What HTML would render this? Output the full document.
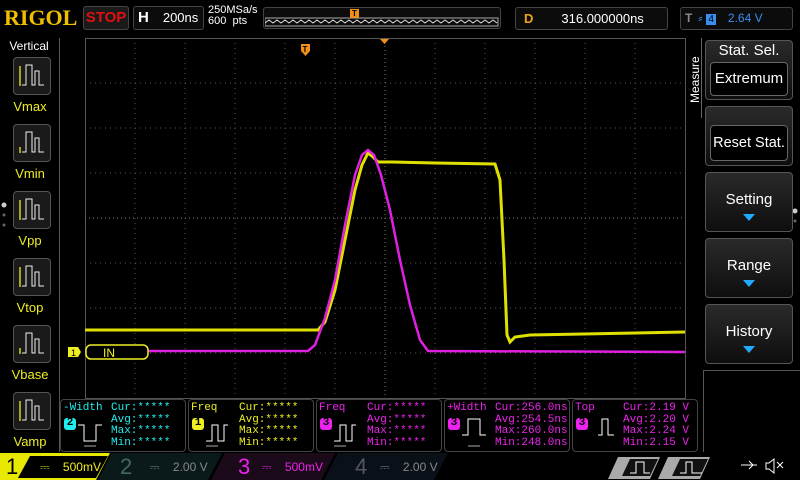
<!DOCTYPE html>
<html><head><meta charset="utf-8"><style>
*{margin:0;padding:0;box-sizing:border-box}
body{width:800px;height:480px;background:#000;overflow:hidden;position:relative;font-family:"Liberation Sans",sans-serif;color:#fff}
.a{position:absolute}
.box{position:absolute;border:1px solid #444;border-radius:3px;background:#0c0c0c}
.lb{position:absolute;left:0;width:60px;text-align:center;font-size:13px;color:#ee2}
.btn{position:absolute;left:13px;width:38px;height:38px;border:1px solid #555;border-radius:4px;background:#1a1a1a}
.rb{position:absolute;left:705px;width:88px;height:60px;border:1px solid #555;border-radius:4px;background:linear-gradient(#2a2a2a,#0e0e0e);text-align:center;font-size:15px;color:#fff}
.mb{position:absolute;top:399px;height:53px;width:126px;border:1px solid #444;border-radius:4px;font-family:"Liberation Mono",monospace;font-size:11px;line-height:11.5px}
.tri{display:inline-block;width:0;height:0;border-left:6px solid transparent;border-right:6px solid transparent;border-top:7px solid #2af}
</style></head><body>
<div class="a" style="left:4px;top:5px;font-family:'Liberation Serif',serif;font-weight:bold;font-size:22px;color:#f0c000;letter-spacing:0px">RIGOL</div>
<div class="box" style="left:83px;top:6px;width:46px;height:24px;color:#e01010;font-weight:bold;font-size:15px;text-align:center;line-height:22px;background:#1a1a1a">STOP</div>
<div class="box" style="left:133px;top:6px;width:71px;height:24px;font-size:13px;line-height:22px"><b style="margin-left:4px;font-size:15px">H</b><span style="margin-left:14px">200ns</span></div>
<div class="a" style="left:208px;top:5px;font-size:11px;line-height:11px">250MSa/s<br>600&nbsp; pts</div>
<div class="box" style="left:263px;top:7px;width:238px;height:22px"></div>
<svg class="a" style="left:265px;top:17px" width="234" height="10"><polyline fill="none" stroke="#ddd" stroke-width="1" points="0,6 4,3 8,6 12,3 16,6 20,3 24,6 28,3 32,6 36,3 40,6 44,3 48,6 52,3 56,6 60,3 64,6 68,3 72,6 76,3 80,6 84,3 88,6 92,3 96,6 100,3 104,6 108,3 112,6 116,3 120,6 124,3 128,6 132,3 136,6 140,3 144,6 148,3 152,6 156,3 160,6 164,3 168,6 172,3 176,6 180,3 184,6 188,3 192,6 196,3 200,6 204,3 208,6 212,3 216,6 220,3 224,6 228,3 232,6"/><rect x="0" y="1" width="233" height="8" fill="none" stroke="#aaa"/></svg>
<div class="a" style="left:350px;top:9px;width:9px;height:9px;background:#f0901a;color:#000;font-size:8px;text-align:center;line-height:9px;font-weight:bold">T</div>
<div class="box" style="left:515px;top:7px;width:153px;height:23px;font-size:13px;line-height:21px"><b style="color:#f0a020;margin-left:8px">D</b><span style="margin-left:28px">316.000000ns</span></div>
<div class="box" style="left:680px;top:7px;width:113px;height:23px;font-size:12px;line-height:21px;color:#3a8ef0"><b style="color:#888;margin-left:4px">T</b><span style="margin-left:6px">⸗</span><span style="background:#3a8ef0;color:#000;padding:0 2px;margin-left:4px;font-size:10px">4</span><span style="margin-left:12px">2.64 V</span></div>

<!-- left panel -->
<div class="a" style="left:0;top:38px;width:60px;height:414px;border-right:1px solid #555"></div>
<div class="a" style="left:0;top:39px;width:58px;text-align:center;font-size:12px">Vertical</div>
<div class="btn" style="top:57px"></div><div class="lb" style="top:99px">Vmax</div>
<div class="btn" style="top:124px"></div><div class="lb" style="top:166px">Vmin</div>
<div class="btn" style="top:191px"></div><div class="lb" style="top:233px">Vpp</div>
<div class="btn" style="top:258px"></div><div class="lb" style="top:300px">Vtop</div>
<div class="btn" style="top:325px"></div><div class="lb" style="top:367px">Vbase</div>
<div class="btn" style="top:392px"></div><div class="lb" style="top:434px">Vamp</div>
<svg class="a" style="left:0;top:0" width="60" height="452">
<g fill="none" stroke="#eee" stroke-width="1">
<path d="M22,85 h4 v-20 h6 v20 h3 v-14 h4 v14 h5"/><path d="M22,152 h4 v-20 h6 v20 h3 v-14 h4 v14 h5"/><path d="M22,219 h4 v-20 h6 v20 h3 v-14 h4 v14 h5"/><path d="M22,286 h4 v-20 h6 v20 h3 v-14 h4 v14 h5"/><path d="M22,353 h4 v-20 h6 v20 h3 v-14 h4 v14 h5"/><path d="M22,420 h4 v-20 h6 v20 h3 v-14 h4 v14 h5"/>
</g>
<g stroke="#ee2" stroke-width="1.3"><path d="M20,66 v20 M20,153 v-6 M20,200 v20 M20,267 v20 M20,354 v-6 M20,401 v20"/></g>
<circle cx="4" cy="205" r="2.5" fill="#ccc"/><circle cx="4" cy="215" r="1.5" fill="#666"/><circle cx="4" cy="225" r="1.5" fill="#666"/>
</svg>

<!-- grid -->
<svg class="a" style="left:0;top:0" width="800" height="480">
<rect x="85.5" y="38.5" width="600" height="360" fill="none" stroke="#555"/>
<g stroke="#555" stroke-dasharray="1,4">
<path d="M135,38v360M185,38v360M235,38v360M285,38v360M335,38v360M435,38v360M485,38v360M535,38v360M585,38v360M635,38v360"/>
<path d="M85,83h600M85,128h600M85,173h600M85,263h600M85,308h600M85,353h600"/>
</g>
<g stroke="#777" stroke-dasharray="1,3"><path d="M385,38v360M85,218h600"/></g>
<polyline fill="none" stroke="#e0e000" stroke-width="3" points="85,330 318,330 325,322 335,290 345,240 355,190 362,165 368,153 373,157 378,162 392,162 435,163 495,164 500,180 504,260 507,335 510,342 515,337 530,335 685,332"/>
<polyline fill="none" stroke="#e020e0" stroke-width="2.5" points="85,351 308,351 315,345 325,318 335,280 345,225 355,175 362,155 368,150 374,155 381,175 390,210 400,260 410,305 420,340 428,351 685,352"/>
<path d="M68,347h10l3,5l-3,5h-10z" fill="#ee2"/><text x="71" y="356" font-size="9" fill="#000" font-family="Liberation Sans">1</text>
<rect x="86" y="345" width="62" height="14" rx="5" fill="#000" stroke="#ee2" stroke-width="1.5"/>
<text x="103" y="357" font-size="12" fill="#ee2" font-family="Liberation Sans">IN</text>
<path d="M301,44h9v7l-4.5,5l-4.5,-5z" fill="#f0901a"/><text x="302.5" y="52" font-size="8" fill="#000" font-weight="bold" font-family="Liberation Sans">T</text>
<path d="M380,39h9l-4.5,5z" fill="#f0901a"/>
<circle cx="795" cy="211" r="2.5" fill="#ccc"/><circle cx="795" cy="221" r="1.5" fill="#666"/>
</svg>

<!-- right panel -->
<div class="a" style="left:688px;top:38px;width:14px;height:80px;border-right:1px solid #666"></div>
<div class="a" style="left:682px;top:50px;font-size:12px;transform:rotate(-90deg);transform-origin:left top;top:103px;left:688px">Measure</div>
<div class="rb" style="top:40px;line-height:20px">Stat. Sel.<div style="margin:1px 4px 0;height:34px;border:1px solid #666;border-radius:4px;background:#000;line-height:32px">Extremum</div></div>
<div class="rb" style="top:106px"><div style="margin:18px 4px 0;height:36px;border:1px solid #666;border-radius:4px;background:#000;line-height:34px;font-size:14.5px">Reset Stat.</div></div>
<div class="rb" style="top:172px;padding-top:18px">Setting<br><span class="tri"></span></div>
<div class="rb" style="top:238px;padding-top:18px">Range<br><span class="tri"></span></div>
<div class="rb" style="top:304px;padding-top:18px">History<br><span class="tri"></span></div>
<div class="a" style="left:703px;top:370px;width:97px;height:82px;border-left:1px solid #555;border-top:1px solid #555"></div>

<!-- measurements -->
<div class="mb" style="left:60px;color:#2ee"><div class="a" style="left:2px;top:3px">-Width</div><div class="a" style="left:50px;top:3px">Cur:*****<br>Avg:*****<br>Max:*****<br>Min:*****</div><div class="a" style="left:3px;top:18px;width:12px;height:12px;border-radius:3px;background:#2ee;color:#000;text-align:center;font-weight:bold">2</div></div>
<div class="mb" style="left:188px;color:#ee2"><div class="a" style="left:2px;top:3px">Freq</div><div class="a" style="left:50px;top:3px">Cur:*****<br>Avg:*****<br>Max:*****<br>Min:*****</div><div class="a" style="left:3px;top:18px;width:12px;height:12px;border-radius:3px;background:#ee2;color:#000;text-align:center;font-weight:bold">1</div></div>
<div class="mb" style="left:316px;color:#e2e"><div class="a" style="left:2px;top:3px">Freq</div><div class="a" style="left:50px;top:3px">Cur:*****<br>Avg:*****<br>Max:*****<br>Min:*****</div><div class="a" style="left:3px;top:18px;width:12px;height:12px;border-radius:3px;background:#e2e;color:#000;text-align:center;font-weight:bold">3</div></div>
<div class="mb" style="left:444px;color:#e2e"><div class="a" style="left:2px;top:3px">+Width</div><div class="a" style="left:50px;top:3px">Cur:256.0ns<br>Avg:254.5ns<br>Max:260.0ns<br>Min:248.0ns</div><div class="a" style="left:3px;top:18px;width:12px;height:12px;border-radius:3px;background:#e2e;color:#000;text-align:center;font-weight:bold">3</div></div>
<div class="mb" style="left:572px;color:#e2e"><div class="a" style="left:2px;top:3px">Top</div><div class="a" style="left:50px;top:3px">Cur:2.19 V<br>Avg:2.20 V<br>Max:2.24 V<br>Min:2.15 V</div><div class="a" style="left:3px;top:18px;width:12px;height:12px;border-radius:3px;background:#e2e;color:#000;text-align:center;font-weight:bold">3</div></div>
<svg class="a" style="left:0;top:399px" width="800" height="53"><g fill="none" stroke="#fff" stroke-width="1">
<path d="M78,26h6v16h12v-16h6"/><path d="M206,42h6v-16h6v16h6v-16h4"/><path d="M334,42h6v-16h6v16h6v-16h4"/><path d="M462,36h6v-16h12v16h6"/><path d="M598,36h4v-16h6v16h6"/></g>
<path d="M84,47h12M206,47h12M334,47h12M468,47h12" stroke-width="1.3" stroke="#888"/></svg>

<!-- bottom bar -->
<div class="a" style="left:0;top:453px;width:800px;height:27px;background:#000"></div>
<svg class="a" style="left:0;top:453px" width="800" height="27">
<path d="M0,0h110l-14,27h-96z" fill="#e8e800"/>
<path d="M30,3h78l-12,22h-78z" fill="#000"/>
<path d="M112,0h110l-14,27h-110z" fill="#0a1a1a"/>
<path d="M225,0h110l-14,27h-110z" fill="#1a0a1a"/>
<path d="M338,0h110l-14,27h-110z" fill="#0a1018"/>
<path d="M618,4h42l-10,22h-42z" fill="#aaa"/><path d="M668,4h42l-10,22h-42z" fill="#aaa"/>
<path d="M630,6h28l-8,17h-28z" fill="#111"/><path d="M680,6h28l-8,17h-28z" fill="#111"/>
<path d="M630,20h6v-11h8v11h6" stroke="#fff" fill="none"/><path d="M680,20h6v-11h6v11h10" stroke="#fff" fill="none"/>
<path d="M741,12h16M749,8l4,4M749,16l4-4" stroke="#fff"/>
<path d="M766,10h3l5,-4v14l-5,-4h-3z" fill="none" stroke="#fff"/><path d="M777,9l6,6M783,9l-6,6" stroke="#fff"/>
</svg>
<div class="a" style="left:6px;top:454px;font-size:22px;color:#000">1</div>
<div class="a" style="left:40px;top:460px;font-size:12px;color:#ee2">⎓ <span style="margin-left:10px">500mV</span></div>
<div class="a" style="left:120px;top:454px;font-size:22px;color:#466">2</div>
<div class="a" style="left:150px;top:460px;font-size:12px;color:#888">⎓ <span style="margin-left:10px">2.00 V</span></div>
<div class="a" style="left:238px;top:454px;font-size:22px;color:#e2e">3</div>
<div class="a" style="left:262px;top:460px;font-size:12px;color:#e2e">⎓ <span style="margin-left:10px">500mV</span></div>
<div class="a" style="left:355px;top:454px;font-size:22px;color:#556">4</div>
<div class="a" style="left:380px;top:460px;font-size:12px;color:#888">⎓ <span style="margin-left:10px">2.00 V</span></div>
</body></html>
